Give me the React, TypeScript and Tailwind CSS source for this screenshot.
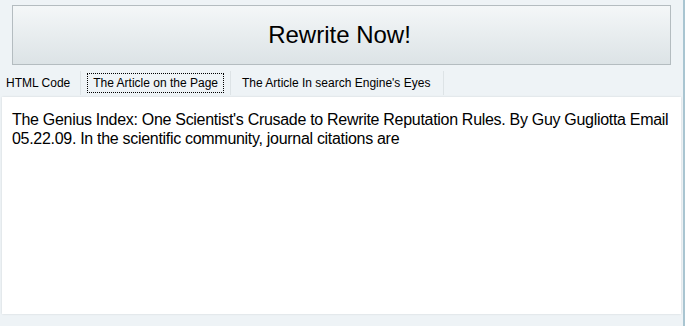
export default function App() {
  return (
    <div className="flex h-[326px] w-[685px] bg-[#eef3f6] font-['Liberation_Sans',Arial,sans-serif] text-black">
      <div className="flex w-[682px] flex-col">
        <div className="px-[12px] pt-[5px]">
          <button className="flex h-[60px] w-[659px] items-center justify-center border border-[#b4bcc0] bg-gradient-to-b from-[#f4f7f8] to-[#dce3e6] pr-[4px] text-[24px]">
            Rewrite Now!
          </button>
        </div>
        <div className="mt-[3px] flex h-[29px] items-center text-[12px]">
          <div className="pl-[6px] pr-[10px]">HTML Code</div>
          <div className="h-[24px] w-px bg-[#dde3e6]" />
          <div className="px-[6px]">
            <span className="border border-dotted border-black px-[5px] py-[2px]">The Article on the Page</span>
          </div>
          <div className="h-[24px] w-px bg-[#dde3e6]" />
          <div className="pl-[11px] pr-[13px]">The Article In search Engine's Eyes</div>
          <div className="h-[24px] w-px bg-[#dde3e6]" />
        </div>
        <div className="ml-[2px] h-[217px] w-[679px] bg-white pl-[10px] pr-[4px] pt-[13px] text-[16px] leading-[19px] tracking-[-0.3px] shadow-[0_0_2px_rgba(0,0,0,0.12)]">
          The Genius Index: One Scientist's Crusade to Rewrite Reputation Rules. By Guy Gugliotta Email 05.22.09. In the scientific community, journal citations are
        </div>
      </div>
      <div className="w-px" />
      <div className="w-[2px] bg-[#a9c5d1]" />
    </div>
  );
}
